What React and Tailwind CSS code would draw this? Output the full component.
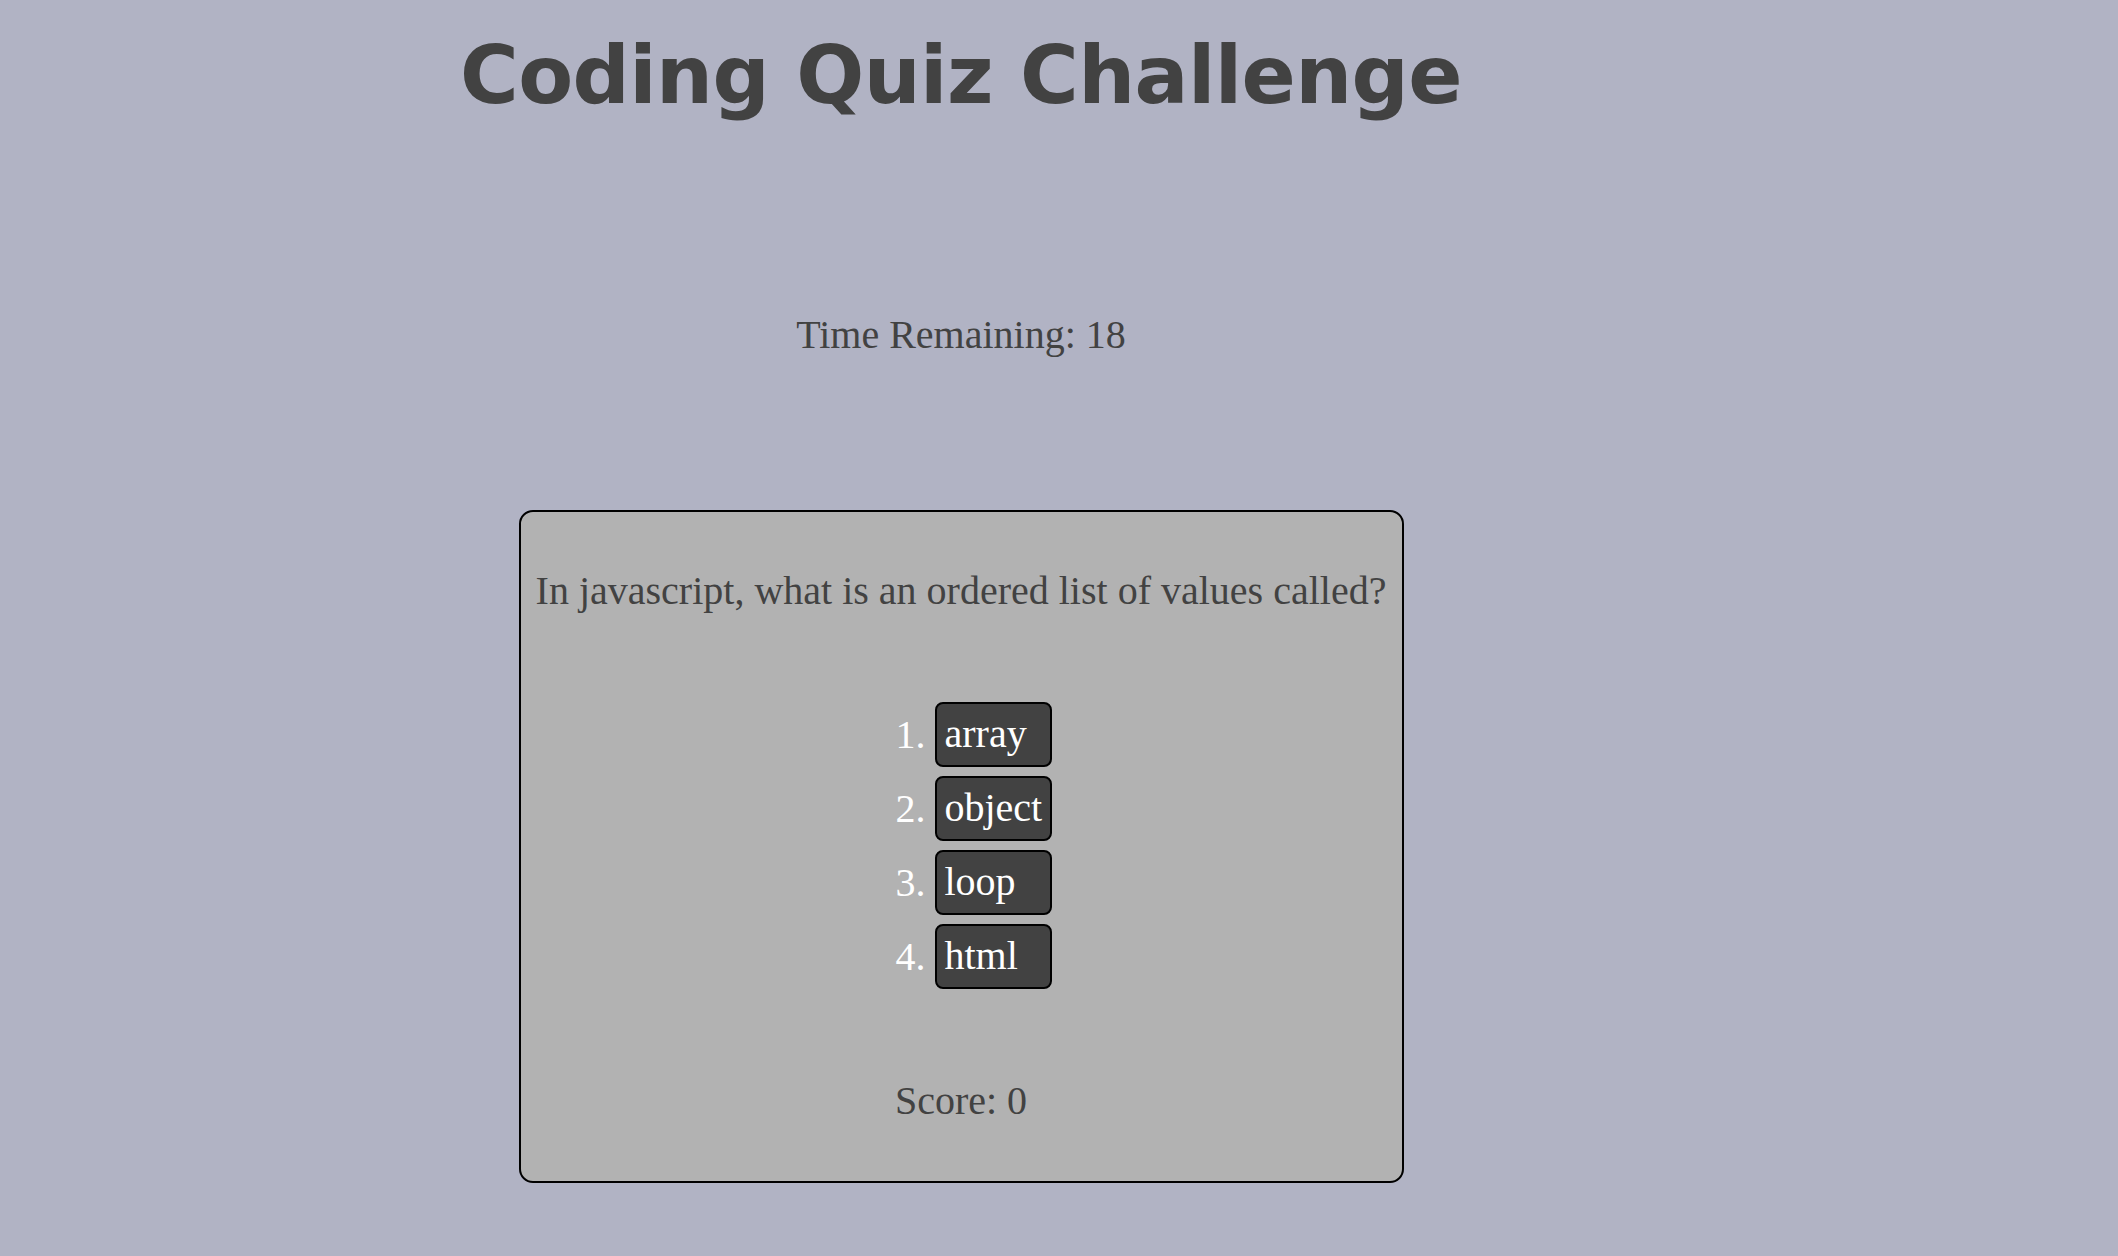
export default function App() {
  const options = ["array", "object", "loop", "html"];
  return (
    <div className="min-h-[1256px] w-full bg-[#b1b3c4]">
      <div className="w-[1922px] flex flex-col items-center">
        <h1 className="mt-[36px] text-[80px] leading-[80px] font-bold tracking-[-0.6px] text-[#424242] [font-family:'DejaVu_Sans',Verdana,sans-serif]">
          Coding Quiz Challenge
        </h1>
        <p className="mt-[196px] text-[40px] leading-[46px] text-[#424242] [font-family:'Liberation_Serif','Times_New_Roman',serif]">
          Time Remaining: 18
        </p>
        <div className="mt-[152px] w-[885px] rounded-[14px] border-2 border-black bg-[#b2b2b2] pt-[56px] pb-[57px] flex flex-col items-center [font-family:'Liberation_Serif','Times_New_Roman',serif]">
          <p className="text-[40px] leading-[46px] text-[#424242] whitespace-nowrap">
            In javascript, what is an ordered list of values called?
          </p>
          <ol className="mt-[88px] self-start ml-[374px] flex flex-col gap-[9px]">
            {options.map((o, i) => (
              <li key={o} className="flex items-center text-white text-[40px] leading-[46px]">
                <span className="w-[40px] pr-[9px] text-right">{i + 1}.</span>
                <button className="w-[117px] h-[65px] rounded-[8px] border-2 border-black bg-[#424242] text-white text-left pl-[8px] pt-[7px] pb-[8px] text-[40px] leading-[46px] [font-family:'Liberation_Serif','Times_New_Roman',serif]">
                  {o}
                </button>
              </li>
            ))}
          </ol>
          <p className="mt-[89px] text-[40px] leading-[46px] text-[#424242]">Score: 0</p>
        </div>
      </div>
    </div>
  );
}
